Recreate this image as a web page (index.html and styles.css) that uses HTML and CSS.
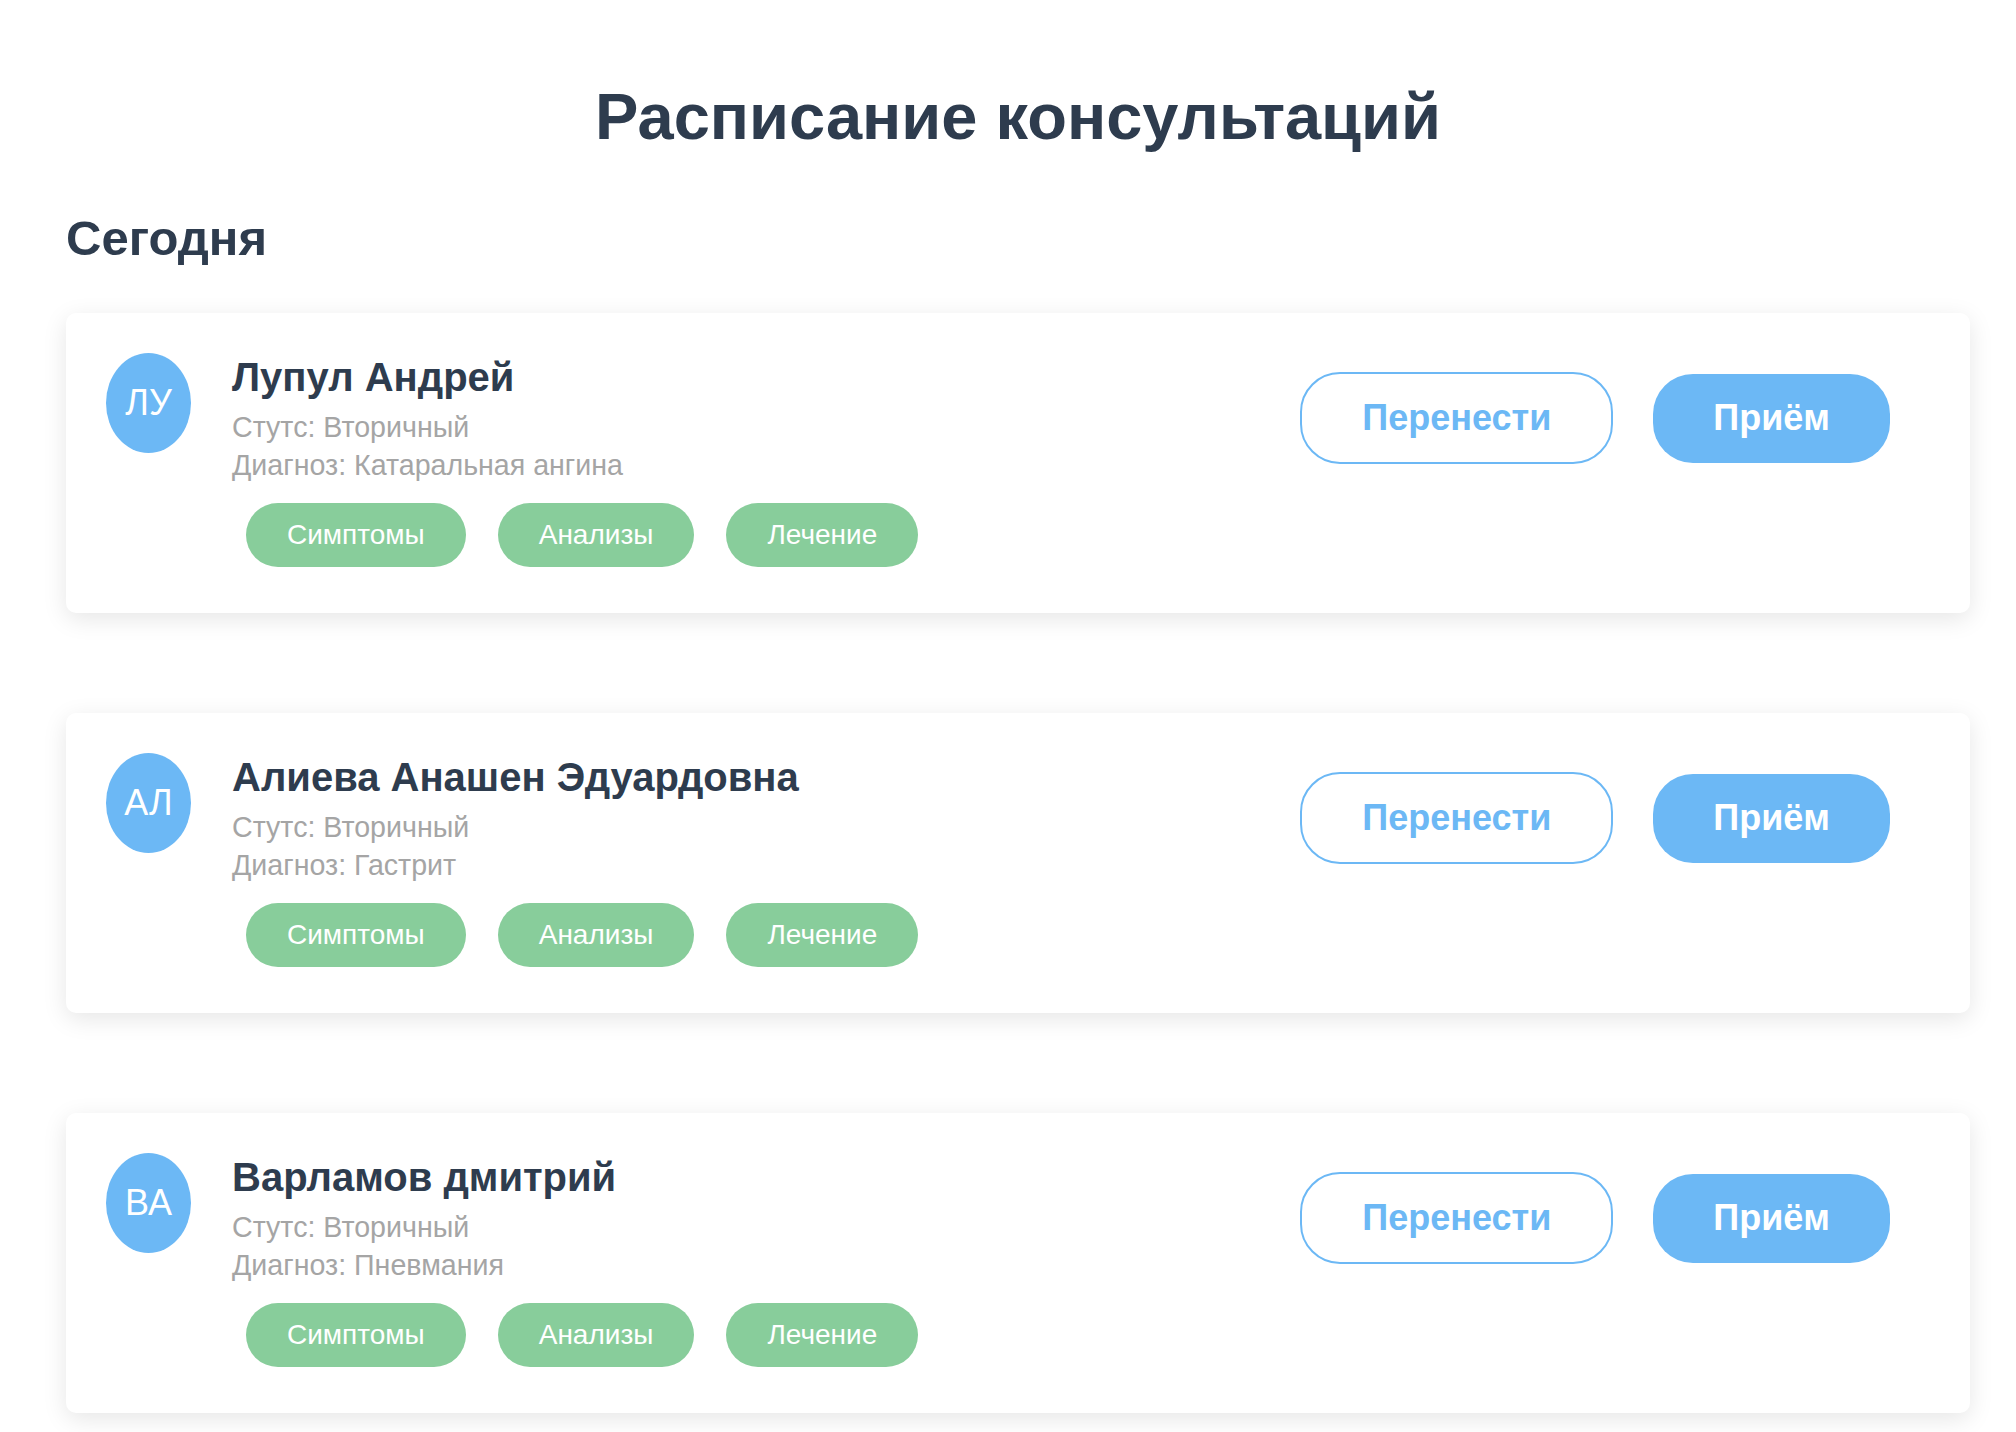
FILE: index.html
```html
<!DOCTYPE html>
<html lang="ru">
<head>
<meta charset="utf-8">
<title>Расписание консультаций</title>
<link rel="stylesheet" href="styles.css">
</head>
<body>
<main class="page">
  <h1 class="page-title">Расписание консультаций</h1>
  <h2 class="section-title">Сегодня</h2>
  <div class="list">
    <div class="card">
      <div class="patient">
        <div class="avatar">ЛУ</div>
        <div class="info">
          <div class="name">Лупул Андрей</div>
          <div class="meta meta-status">Стутс: Вторичный</div>
          <div class="meta">Диагноз: Катаральная ангина</div>
          <div class="tags">
            <span class="tag">Симптомы</span>
            <span class="tag">Анализы</span>
            <span class="tag">Лечение</span>
          </div>
        </div>
      </div>
      <div class="actions">
        <button class="btn btn-outline">Перенести</button>
        <button class="btn btn-primary">Приём</button>
      </div>
    </div>
    <div class="card">
      <div class="patient">
        <div class="avatar">АЛ</div>
        <div class="info">
          <div class="name">Алиева Анашен Эдуардовна</div>
          <div class="meta meta-status">Стутс: Вторичный</div>
          <div class="meta">Диагноз: Гастрит</div>
          <div class="tags">
            <span class="tag">Симптомы</span>
            <span class="tag">Анализы</span>
            <span class="tag">Лечение</span>
          </div>
        </div>
      </div>
      <div class="actions">
        <button class="btn btn-outline">Перенести</button>
        <button class="btn btn-primary">Приём</button>
      </div>
    </div>
    <div class="card">
      <div class="patient">
        <div class="avatar">ВА</div>
        <div class="info">
          <div class="name">Варламов дмитрий</div>
          <div class="meta meta-status">Стутс: Вторичный</div>
          <div class="meta">Диагноз: Пневмания</div>
          <div class="tags">
            <span class="tag">Симптомы</span>
            <span class="tag">Анализы</span>
            <span class="tag">Лечение</span>
          </div>
        </div>
      </div>
      <div class="actions">
        <button class="btn btn-outline">Перенести</button>
        <button class="btn btn-primary">Приём</button>
      </div>
    </div>
  </div>
</main>
</body>
</html>
```

FILE: styles.css
```css
* { box-sizing: border-box; }
html, body { margin: 0; padding: 0; background: #ffffff; }
body {
  font-family: "Liberation Sans", Arial, Helvetica, sans-serif;
  color: #2e3c4e;
}
.page {
  padding: 79px 46px 40px 66px;
}
.page-title {
  margin: 0;
  text-align: center;
  font-size: 65px;
  line-height: 76px;
  font-weight: 700;
  color: #2e3c4e;
}
.section-title {
  margin: 57px 0 0 0;
  font-size: 49px;
  line-height: 52px;
  font-weight: 700;
  color: #2e3c4e;
}
.list {
  margin-top: 49px;
  display: flex;
  flex-direction: column;
  gap: 100px;
}
.card {
  display: flex;
  justify-content: space-between;
  align-items: flex-start;
  height: 300px;
  padding: 40px;
  background: #ffffff;
  border-radius: 10px;
  box-shadow: 0 6px 24px rgba(0, 0, 0, 0.10);
}
.patient {
  display: flex;
  align-items: flex-start;
  gap: 41px;
}
.avatar {
  width: 85px;
  height: 100px;
  border-radius: 50%;
  background: #6cb8f5;
  color: #ffffff;
  font-size: 36px;
  display: flex;
  align-items: center;
  justify-content: center;
  flex-shrink: 0;
}
.info {
  display: flex;
  flex-direction: column;
}
.name {
  font-size: 40px;
  line-height: 48px;
  font-weight: 700;
  color: #2e3c4e;
}
.meta {
  font-size: 28.6px;
  line-height: 38px;
  color: #a5a5a5;
}
.meta-status { margin-top: 7px; }
.tags {
  display: flex;
  margin-top: 19px;
  margin-left: -2px;
}
.tag {
  margin: 0 16px;
  height: 64px;
  padding: 0 41px;
  border-radius: 32px;
  background: #88cd9b;
  color: #ffffff;
  font-size: 28px;
  display: flex;
  align-items: center;
}
.actions {
  display: flex;
  align-items: center;
  gap: 40px;
  margin-top: 19px;
  padding-right: 40px;
}
.btn {
  font-family: inherit;
  font-size: 36px;
  font-weight: 700;
  border-radius: 40px;
  padding: 0 60px;
  cursor: pointer;
}
.btn-outline {
  height: 92px;
  border: 2px solid #6cb8f5;
  background: #ffffff;
  color: #6cb8f5;
}
.btn-primary {
  height: 89px;
  border: none;
  background: #6cb8f5;
  color: #ffffff;
}
```
